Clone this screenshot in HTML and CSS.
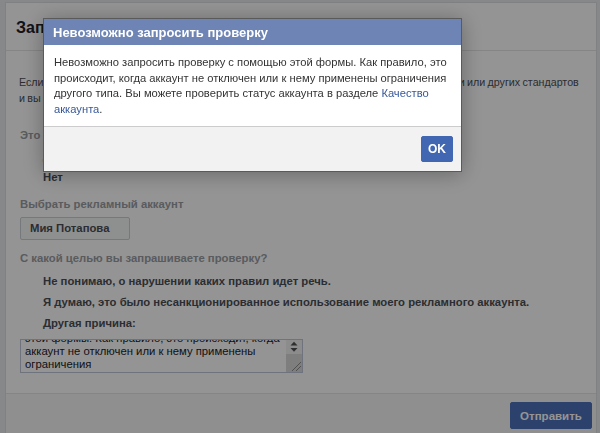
FILE: index.html
```html
<!DOCTYPE html>
<html lang="ru">
<head>
<meta charset="utf-8">
<title>Запросить проверку</title>
<link rel="stylesheet" href="styles.css">
</head>
<body>
<div class="panel">
  <div class="panel-header"><h1 class="panel-title">Запросить проверку</h1></div>
  <div class="panel-body">
    <div class="intro">
      <div class="intro-line">Если ваш рекламный аккаунт был отключен из-за нарушения Правил рекламной политики или других стандартов</div>
      <div class="intro-line">и вы считаете, что это ошибка, вы можете запросить проверку.</div>
    </div>
    <div class="label q1">Это ваш рекламный аккаунт?</div>
    <div class="option first">Да</div>
    <div class="option">Нет</div>
    <div class="label q2">Выбрать рекламный аккаунт</div>
    <div class="select">Мия Потапова</div>
    <div class="label q3">С какой целью вы запрашиваете проверку?</div>
    <div class="option first2">Не понимаю, о нарушении каких правил идет речь.</div>
    <div class="option">Я думаю, это было несанкционированное использование моего рекламного аккаунта.</div>
    <div class="option">Другая причина:</div>
    <div class="textarea">
      <div class="textarea-text">
        <div class="ta-line">Невозможно запросить проверку с помощью</div>
        <div class="ta-line">этой формы. Как правило, это происходит, когда</div>
        <div class="ta-line">аккаунт не отключен или к нему применены</div>
        <div class="ta-line">ограничения</div>
      </div>
      <svg class="scrollbar" width="16" height="32" viewBox="0 0 16 32" aria-hidden="true">
        <rect x="0" y="0" width="16" height="32" fill="#f1f1f1"/>
        <polygon points="4.5,5.5 11.5,5.5 8,1.8" fill="#505050"/>
        <polygon points="4.5,8 11.5,8 8,11.7" fill="#505050"/>
        <rect x="0" y="14" width="16" height="18" fill="#dadada"/>
        <line x1="6" y1="31" x2="15" y2="22" stroke="#8a8a8a" stroke-width="1"/>
        <line x1="10" y1="31" x2="15" y2="26" stroke="#8a8a8a" stroke-width="1"/>
      </svg>
    </div>
  </div>
  <div class="panel-footer">
    <button class="submit" type="button">Отправить</button>
  </div>
</div>

<div class="overlay"></div>

<div class="dialog" role="dialog">
  <div class="dialog-header">Невозможно запросить проверку</div>
  <div class="dialog-body">Невозможно запросить проверку с помощью этой формы. Как правило, это<br>происходит, когда аккаунт не отключен или к нему применены ограничения<br>другого типа. Вы можете проверить статус аккаунта в разделе <a class="link" href="#">Качество<br>аккаунта</a>.</div>
  <div class="dialog-footer">
    <button class="ok" type="button">OK</button>
  </div>
</div>
</body>
</html>
```

FILE: styles.css
```css
html, body {
  margin: 0;
  padding: 0;
}
body {
  background: #e9ebee;
  font-family: "Liberation Sans", Arial, sans-serif;
  font-size: 11.3px;
  color: #1d2129;
  padding-left: 5px;
  height: 433px;
  overflow: hidden;
}
.panel {
  margin-top: 2px;
  width: 590px;
  background: #fff;
  border: 1px solid #dddfe2;
  border-bottom: none;
}
.panel-header {
  height: 47px;
  padding: 0 10px;
  border-bottom: 1px solid #e5e5e5;
  display: flex;
  align-items: center;
}
.panel-title {
  margin: 0;
  font-size: 16px;
  font-weight: bold;
  color: #1d2129;
  padding-top: 2px;
}
.panel-body {
  padding: 23px 14px 20px 13px;
  border-bottom: 1px solid #e5e5e5;
}
.intro {
  font-size: 10.7px;
  line-height: 16px;
  word-spacing: -0.6px;
  color: #4b4f56;
}
.intro-line {
  white-space: nowrap;
}
.label {
  font-weight: bold;
  color: #9a9da3;
  line-height: 16px;
  padding-left: 1px;
}
.q1 { margin-top: 21px; }
.q2 { margin-top: 11px; }
.q3 { margin-top: 10px; }
.option {
  font-weight: bold;
  color: #4b4f56;
  line-height: 16px;
  padding-left: 24px;
  margin-top: 5px;
}
.option.first2 { margin-top: 7px; }
.select {
  margin-top: 5px;
  margin-left: 1px;
  width: 99px;
  height: 21px;
  line-height: 21px;
  padding-left: 9px;
  border: 1px solid #ccd0d5;
  border-radius: 2px;
  background: #f5f6f7;
  font-weight: bold;
  color: #4b4f56;
}
.textarea {
  margin-top: 8px;
  margin-left: 1px;
  width: 281px;
  height: 32px;
  border: 1px solid #bdc7d8;
  display: flex;
  background: #fff;
}
.textarea-text {
  flex: 1;
  display: flex;
  flex-direction: column;
  justify-content: flex-end;
  overflow: hidden;
  padding: 0 4px 1px 4px;
  line-height: 13px;
  color: #1d2129;
}
.ta-line {
  white-space: nowrap;
}
.scrollbar {
  display: block;
  flex: none;
}
.panel-footer {
  display: flex;
  justify-content: flex-end;
  padding: 8px 4px 5px 0;
  background: #f6f7f9;
}
.submit {
  height: 27px;
  width: 82px;
  padding: 0;
  border: 1px solid #4c70ba;
  border-radius: 2px;
  background: #4c70ba;
  color: #fff;
  font-family: "Liberation Sans", Arial, sans-serif;
  font-size: 11.5px;
  font-weight: bold;
}
.overlay {
  position: fixed;
  inset: 0;
  background: rgba(0, 0, 0, 0.42);
}
.dialog {
  position: fixed;
  left: 43px;
  top: 18px;
  width: 417px;
  border: 1px solid #5a5a5a;
  background: #fff;
  box-shadow: 0 2px 20px rgba(0, 0, 0, 0.3);
}
.dialog-header {
  height: 26px;
  line-height: 27px;
  padding: 0 9px;
  background: #6d84b4;
  color: #fff;
  font-size: 13px;
  font-weight: bold;
}
.dialog-body {
  padding: 10px 9px 9px 10px;
  font-size: 11.2px;
  line-height: 15.5px;
  color: #333;
  white-space: nowrap;
}
.link {
  color: #365899;
  text-decoration: none;
}
.dialog-footer {
  border-top: 1px solid #ccc;
  background: #f2f2f2;
  padding: 9px 8px 9px 8px;
  display: flex;
  justify-content: flex-end;
}
.ok {
  height: 26px;
  min-width: 30px;
  padding: 0 6px;
  border: 1px solid #4267b2;
  border-radius: 2px;
  background: #4267b2;
  color: #fff;
  font-family: "Liberation Sans", Arial, sans-serif;
  font-size: 12px;
  font-weight: bold;
}
```
